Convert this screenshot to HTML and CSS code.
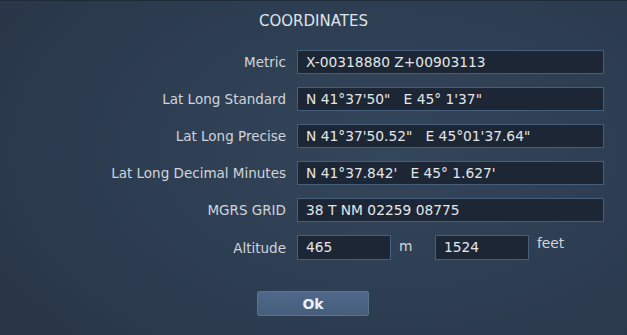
FILE: index.html
```html
<!DOCTYPE html>
<html lang="en">
<head>
    <meta charset="UTF-8">
    <title>Coordinates</title>
    <link rel="stylesheet" href="styles.css">
</head>
<body>

<div class="dialog">
    <div class="title">COORDINATES</div>

    <div class="form">
        <div class="label">Metric</div>
        <div class="field">X-00318880 Z+00903113</div>

        <div class="label">Lat Long Standard</div>
        <div class="field">N 41°37'50"   E 45° 1'37"</div>

        <div class="label">Lat Long Precise</div>
        <div class="field">N 41°37'50.52"   E 45°01'37.64"</div>

        <div class="label">Lat Long Decimal Minutes</div>
        <div class="field">N 41°37.842'   E 45° 1.627'</div>

        <div class="label">MGRS GRID</div>
        <div class="field">38 T NM 02259 08775</div>

        <div class="label">Altitude</div>
        <div class="altitude">
            <div class="field short">465</div>
            <span class="unit">m</span>
            <div class="field short">1524</div>
            <span class="unit feet">feet</span>
        </div>
    </div>

    <div class="actions">
        <button class="ok">Ok</button>
    </div>
</div>

</body>
</html>
```

FILE: styles.css
```css
body {
    margin: 0;
    width: 627px;
    height: 335px;
    overflow: hidden;
    font-family: 'DejaVu Sans', sans-serif;
    background: radial-gradient(ellipse 70% 80% at 62% 45%, #34465b 0%, #2e3e52 55%, #293749 100%);
    color: #d3d8de;
}
.dialog {
    height: 335px;
    box-sizing: border-box;
    border-top: 1px solid #202b38;
    padding-top: 10px;
}
.title {
    text-align: center;
    font-size: 15px;
    color: #dfe3e8;
    height: 20px;
    line-height: 20px;
}
.form {
    display: grid;
    grid-template-columns: 286px 307px;
    column-gap: 11px;
    row-gap: 13px;
    margin-top: 19px;
    align-items: center;
}
.label {
    text-align: right;
    font-size: 13.5px;
    color: #d0d5db;
}
.field {
    height: 24px;
    box-sizing: border-box;
    background: #1c2634;
    border: 1px solid #44607c;
    padding: 0 8px;
    font-size: 13.8px;
    line-height: 22px;
    color: #e3e6ea;
    white-space: pre;
}
.altitude {
    display: flex;
    align-items: flex-start;
}
.field.short {
    width: 94px;
    height: 25px;
    line-height: 23px;
}
.unit {
    font-size: 13.8px;
    color: #d0d5db;
    margin-top: 3px;
    margin-left: 8px;
    width: 36px;
}
.unit.feet {
    margin-top: 0;
}
.actions {
    display: flex;
    margin-top: 31px;
    padding-left: 257px;
}
.ok {
    width: 112px;
    height: 25px;
    border: 1px solid #5a7390;
    border-radius: 2px;
    background: linear-gradient(#50698a, #465e7b);
    color: #eef1f4;
    font-family: 'DejaVu Sans', sans-serif;
    font-weight: bold;
    font-size: 14px;
    padding: 0;
}
```
